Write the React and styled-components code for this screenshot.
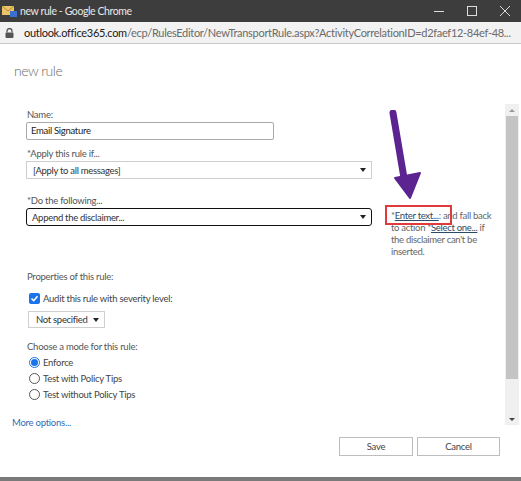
import React from "react";
import styled, { createGlobalStyle } from "styled-components";

const Global = createGlobalStyle`
  html, body { margin: 0; padding: 0; background: #fff; overflow: hidden; }
  * { box-sizing: border-box; }
`;

const Window = styled.div`
  width: 521px;
  height: 481px;
  display: flex;
  flex-direction: column;
  font-family: Lato, "Noto Sans", sans-serif;
  background: #fff;
  border-bottom: 4px solid #7a7a7a;
`;

const TitleBar = styled.div`
  height: 22px;
  background: #3d3d3d;
  display: flex;
  align-items: center;
  color: #e8e8e8;
  font-size: 10.5px;
  letter-spacing: -0.4px;
  padding-left: 2px;
`;

const TitleText = styled.span`
  margin-left: 2px;
  flex: 1;
`;

const WinButton = styled.div`
  width: 33px;
  height: 22px;
  display: flex;
  align-items: center;
  justify-content: center;
`;

const AddressBar = styled.div`
  height: 22px;
  background: #f2f2f2;
  border-bottom: 1px solid #c9c9c9;
  display: flex;
  align-items: center;
  padding-left: 5px;
  font-size: 11px;
  letter-spacing: -0.3px;
  white-space: nowrap;
  overflow: hidden;
`;

const Lock = styled.svg`
  flex-shrink: 0;
  margin-right: 10px;
`;

const Host = styled.span`
  color: #202020;
`;
const Path = styled.span`
  color: #6a6a6a;
`;

const Content = styled.div`
  flex: 1;
  display: flex;
  flex-direction: column;
  position: relative;
  letter-spacing: -0.25px;
`;

const PageTitle = styled.div`
  font-size: 14px;
  letter-spacing: -0.5px;
  color: #6b6b6b;
  font-weight: 300;
  padding: 18px 0 0 14px;
  height: 55px;
`;

const PaneRow = styled.div`
  display: flex;
  height: 331px;
`;

const Pane = styled.div`
  flex: 1;
  display: flex;
  flex-direction: column;
  padding: 9px 0 0 26px;
`;

const Label = styled.div`
  font-size: 9.5px;
  line-height: 14px;
  color: #555;
  margin-left: ${(p) => p.$indent || 1}px;
  margin-top: ${(p) => p.$top || 0}px;
`;

const FieldRow = styled.div`
  display: flex;
  align-items: flex-start;
  height: 18px;
`;

const TextInput = styled.div`
  width: ${(p) => p.$w}px;
  height: 18px;
  border: 1px solid #a9a9a9;
  border-radius: 2px;
  font-size: 9.5px;
  letter-spacing: -0.3px;
  color: #222;
  padding-left: 4px;
  line-height: 16px;
`;

const Select = styled.div`
  width: ${(p) => p.$w}px;
  height: ${(p) => p.$h || 18}px;
  border: ${(p) => (p.$focus ? "1.5px solid #111" : "1px solid #cfcfcf")};
  border-radius: ${(p) => (p.$focus ? 3 : 0)}px;
  font-size: 9.5px;
  letter-spacing: -0.3px;
  color: #333;
  padding: 0 5px 0 ${(p) => p.$pl || 5}px;
  display: flex;
  align-items: center;
  justify-content: space-between;
  white-space: nowrap;
  flex-shrink: 0;
  margin-left: ${(p) => p.$ml || 0}px;
  margin-top: ${(p) => p.$mt || 0}px;
`;

const Caret = styled.span`
  width: 0;
  height: 0;
  border-left: 3px solid transparent;
  border-right: 3px solid transparent;
  border-top: 4px solid #222;
`;

const Hint = styled.div`
  width: 104px;
  margin-left: 19px;
  margin-top: 2px;
  font-size: 9.5px;
  letter-spacing: -0.3px;
  line-height: 12px;
  color: #666;
  position: relative;
  flex-shrink: 0;
`;

const HintLink = styled.span`
  color: #2b4a66;
  text-decoration: underline;
`;

const RedBox = styled.div`
  position: absolute;
  left: -6px;
  top: -5px;
  width: 67px;
  height: 20px;
  border: 2px solid #e03a3a;
`;

const CheckRow = styled.div`
  display: flex;
  align-items: center;
  margin-top: ${(p) => p.$top || 0}px;
  margin-left: 3px;
  font-size: 9.5px;
  color: #444;
  height: 16px;
  gap: 3px;
`;

const Check = styled.span`
  width: 11px;
  height: 11px;
  border-radius: 2px;
  background: #1a73e8;
  display: inline-flex;
  align-items: center;
  justify-content: center;
`;

const Radio = styled.span`
  width: 11px;
  height: 11px;
  border-radius: 50%;
  border: 1px solid ${(p) => (p.$on ? "#1a73e8" : "#555")};
  display: inline-flex;
  align-items: center;
  justify-content: center;
  background: #fff;
  &::after {
    content: "";
    width: 7px;
    height: 7px;
    border-radius: 50%;
    background: ${(p) => (p.$on ? "#1a73e8" : "transparent")};
  }
`;

const MoreLink = styled.div`
  margin-top: auto;
  margin-left: -14px;
  margin-bottom: 0;
  font-size: 9.5px;
  color: #2f6db5;
  line-height: 14px;
`;

const Scrollbar = styled.div`
  width: 14px;
  margin: 5px 2px 5px 0;
  background: #f0f0f0;
  display: flex;
  flex-direction: column;
  align-items: center;
`;

const ScrollBtn = styled.div`
  height: 12px;
  display: flex;
  align-items: center;
  justify-content: center;
`;

const Thumb = styled.div`
  width: 12px;
  height: 263px;
  background: #c4c4c4;
`;

const Spacer = styled.div`
  flex: 1;
`;

const Tri = styled.span`
  width: 0;
  height: 0;
  border-left: 3px solid transparent;
  border-right: 3px solid transparent;
  ${(p) => (p.$up ? "border-bottom: 3px solid #999;" : "border-top: 3px solid #444;")}
`;

const Footer = styled.div`
  display: flex;
  justify-content: flex-end;
  gap: 4px;
  padding: 7px 21px 0 0;
`;

const Button = styled.div`
  width: ${(p) => p.$w}px;
  height: 19px;
  border: 1px solid #bdbdbd;
  background: #fff;
  font-size: 9.5px;
  color: #444;
  display: flex;
  align-items: center;
  justify-content: center;
`;

const Arrow = styled.svg`
  position: absolute;
  left: 380px;
  top: 66px;
  pointer-events: none;
`;

export default function App() {
  return (
    <>
      <Global />
      <Window>
        <TitleBar>
          <svg width="16" height="14" viewBox="0 0 16 14">
            <rect x="0" y="2" width="12" height="9" fill="#e9c46a" />
            <path d="M0 2 L6 7 L12 2" stroke="#b58a2a" fill="none" strokeWidth="1" />
            <rect x="8" y="7" width="7" height="6" fill="#3b6fd1" />
          </svg>
          <TitleText>new rule - Google Chrome</TitleText>
          <WinButton>
            <svg width="10" height="10"><path d="M0 5.5 H10" stroke="#ddd" strokeWidth="1" /></svg>
          </WinButton>
          <WinButton>
            <svg width="10" height="10"><rect x="0.5" y="0.5" width="9" height="9" stroke="#ddd" fill="none" /></svg>
          </WinButton>
          <WinButton>
            <svg width="10" height="10"><path d="M0 0 L10 10 M10 0 L0 10" stroke="#ddd" strokeWidth="1" /></svg>
          </WinButton>
        </TitleBar>
        <AddressBar>
          <Lock width="9" height="10" viewBox="0 0 9 10">
            <path d="M2 4.5 V3 a2.5 2.5 0 0 1 5 0 V4.5" stroke="#555" strokeWidth="1.3" fill="none" />
            <rect x="0.5" y="4.5" width="8" height="5.5" rx="1" fill="#555" />
          </Lock>
          <Host>outlook.office365.com</Host>
          <Path>/ecp/RulesEditor/NewTransportRule.aspx?ActivityCorrelationID=d2faef12-84ef-48...</Path>
        </AddressBar>
        <Content>
          <PageTitle>new rule</PageTitle>
          <PaneRow>
            <Pane>
              <Label>Name:</Label>
              <TextInput $w={248}>Email Signature</TextInput>
              <Label $top={7}>*Apply this rule if...</Label>
              <Select $w={346} $pl={6}>
                [Apply to all messages]
                <Caret />
              </Select>
              <Label $top={15}>*Do the following...</Label>
              <FieldRow>
                <Select $w={346} $focus>
                  Append the disclaimer...
                  <Caret />
                </Select>
                <Hint>
                  <RedBox />
                  *<HintLink>Enter text...</HintLink>: and fall back to action *<HintLink>Select one...</HintLink> if the disclaimer can't be inserted.
                </Hint>
              </FieldRow>
              <Label $top={44}>Properties of this rule:</Label>
              <CheckRow $top={6}>
                <Check>
                  <svg width="9" height="9" viewBox="0 0 9 9"><path d="M1.5 4.5 L3.7 6.7 L7.5 2.3" stroke="#fff" strokeWidth="1.6" fill="none" /></svg>
                </Check>
                Audit this rule with severity level:
              </CheckRow>
              <Select $w={77} $h={17} $ml={2} $mt={5} $pl={7}>
                Not specified
                <Caret />
              </Select>
              <Label $top={12}>Choose a mode for this rule:</Label>
              <CheckRow>
                <Radio $on />
                Enforce
              </CheckRow>
              <CheckRow>
                <Radio />
                Test with Policy Tips
              </CheckRow>
              <CheckRow>
                <Radio />
                Test without Policy Tips
              </CheckRow>
              <MoreLink>More options...</MoreLink>
            </Pane>
            <Scrollbar>
              <ScrollBtn><Tri $up /></ScrollBtn>
              <Thumb />
              <Spacer />
              <ScrollBtn><Tri /></ScrollBtn>
            </Scrollbar>
          </PaneRow>
          <Footer>
            <Button $w={74}>Save</Button>
            <Button $w={83}>Cancel</Button>
          </Footer>
          <Arrow width="50" height="95" viewBox="0 0 50 95">
            <path d="M13 3 L24 68" stroke="#5c2490" strokeWidth="7" strokeLinecap="round" fill="none" />
            <path d="M15 68 L40 63 L30 88 Z" fill="#5c2490" stroke="#5c2490" strokeWidth="2" strokeLinejoin="round" />
          </Arrow>
        </Content>
      </Window>
    </>
  );
}
